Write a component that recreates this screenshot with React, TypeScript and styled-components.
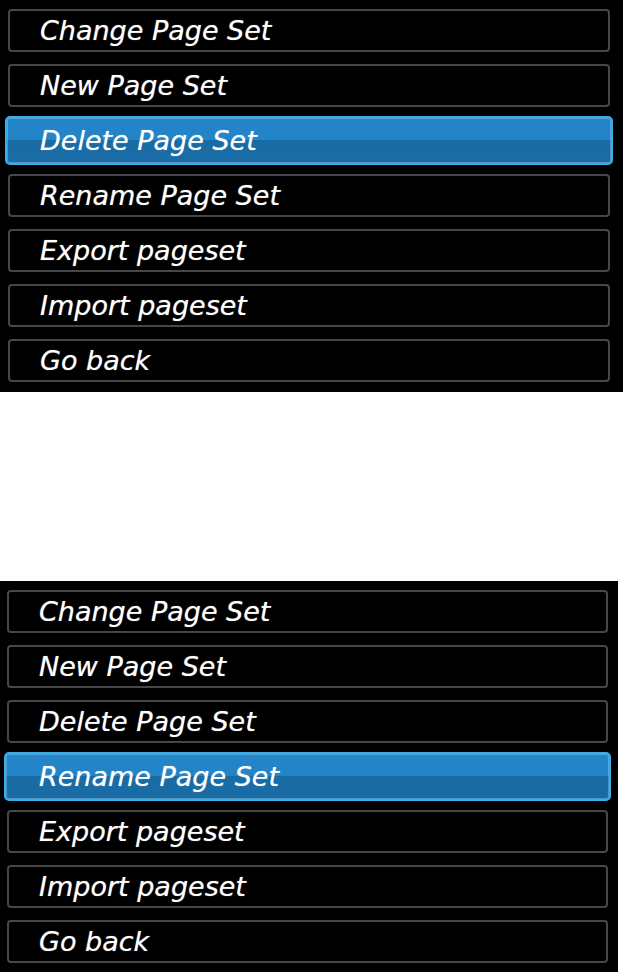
import React from 'react';
import styled, { createGlobalStyle } from 'styled-components';

const GlobalStyle = createGlobalStyle`
    html, body {
        margin: 0;
        padding: 0;
        background: #ffffff;
    }
`;

const items = [
    'Change Page Set',
    'New Page Set',
    'Delete Page Set',
    'Rename Page Set',
    'Export pageset',
    'Import pageset',
    'Go back',
];

type MenuProps = { active: number; $width: number; $height: number; $left: number; $right: number };

const Menu: React.FC<MenuProps> = ({ active, $width, $height, $left, $right }) => {
    return (
        <Panel $width={$width} $height={$height} $left={$left} $right={$right}>
            {items.map((label, index) => (
                <Row key={index} $active={index === active}>
                    <Label>{label}</Label>
                </Row>
            ))}
        </Panel>
    );
};

const App: React.FC = () => {
    return (
        <Page>
            <GlobalStyle />
            <Menu active={2} $width={623} $height={392} $left={8} $right={13} />
            <Spacer />
            <Menu active={3} $width={618} $height={391} $left={7} $right={10} />
        </Page>
    );
};

const Page = styled.div`
    display: flex;
    flex-direction: column;
    width: 623px;
    height: 972px;
    overflow: hidden;
`;

const Spacer = styled.div`
    height: 189px;
    flex-shrink: 0;
`;

const Panel = styled.div<{ $width: number; $height: number; $left: number; $right: number }>`
    display: flex;
    flex-direction: column;
    gap: 12px;
    box-sizing: border-box;
    width: ${(props) => props.$width}px;
    height: ${(props) => props.$height}px;
    flex-shrink: 0;
    padding: 9px ${(props) => props.$right}px 0 ${(props) => props.$left}px;
    background: #000000;
`;

const Row = styled.div<{ $active: boolean }>`
    display: flex;
    align-items: center;
    box-sizing: border-box;
    height: ${(props) => (props.$active ? 49 : 43)}px;
    margin: ${(props) => (props.$active ? '-3px -3px' : '0')};
    padding-left: ${(props) => (props.$active ? 33 : 30)}px;
    border-radius: ${(props) => (props.$active ? 5 : 4)}px;
    border: 2px solid ${(props) => (props.$active ? '#39ade6' : '#474747')};
    background: ${(props) =>
        props.$active ? 'linear-gradient(#2485c8 0%, #2284c6 50%, #196ba4 50%, #1a6ca6 100%)' : '#000000'};
    box-shadow: ${(props) => (props.$active ? 'inset 0 0 0 1px rgba(140, 200, 240, 0.45)' : 'none')};
`;

const Label = styled.span`
    font-family: 'DejaVu Sans', Verdana, sans-serif;
    font-style: italic;
    font-size: 27px;
    color: #ffffff;
    white-space: nowrap;
    text-shadow: 0 0 1px rgba(255, 255, 255, 0.6);
`;

export default App;
